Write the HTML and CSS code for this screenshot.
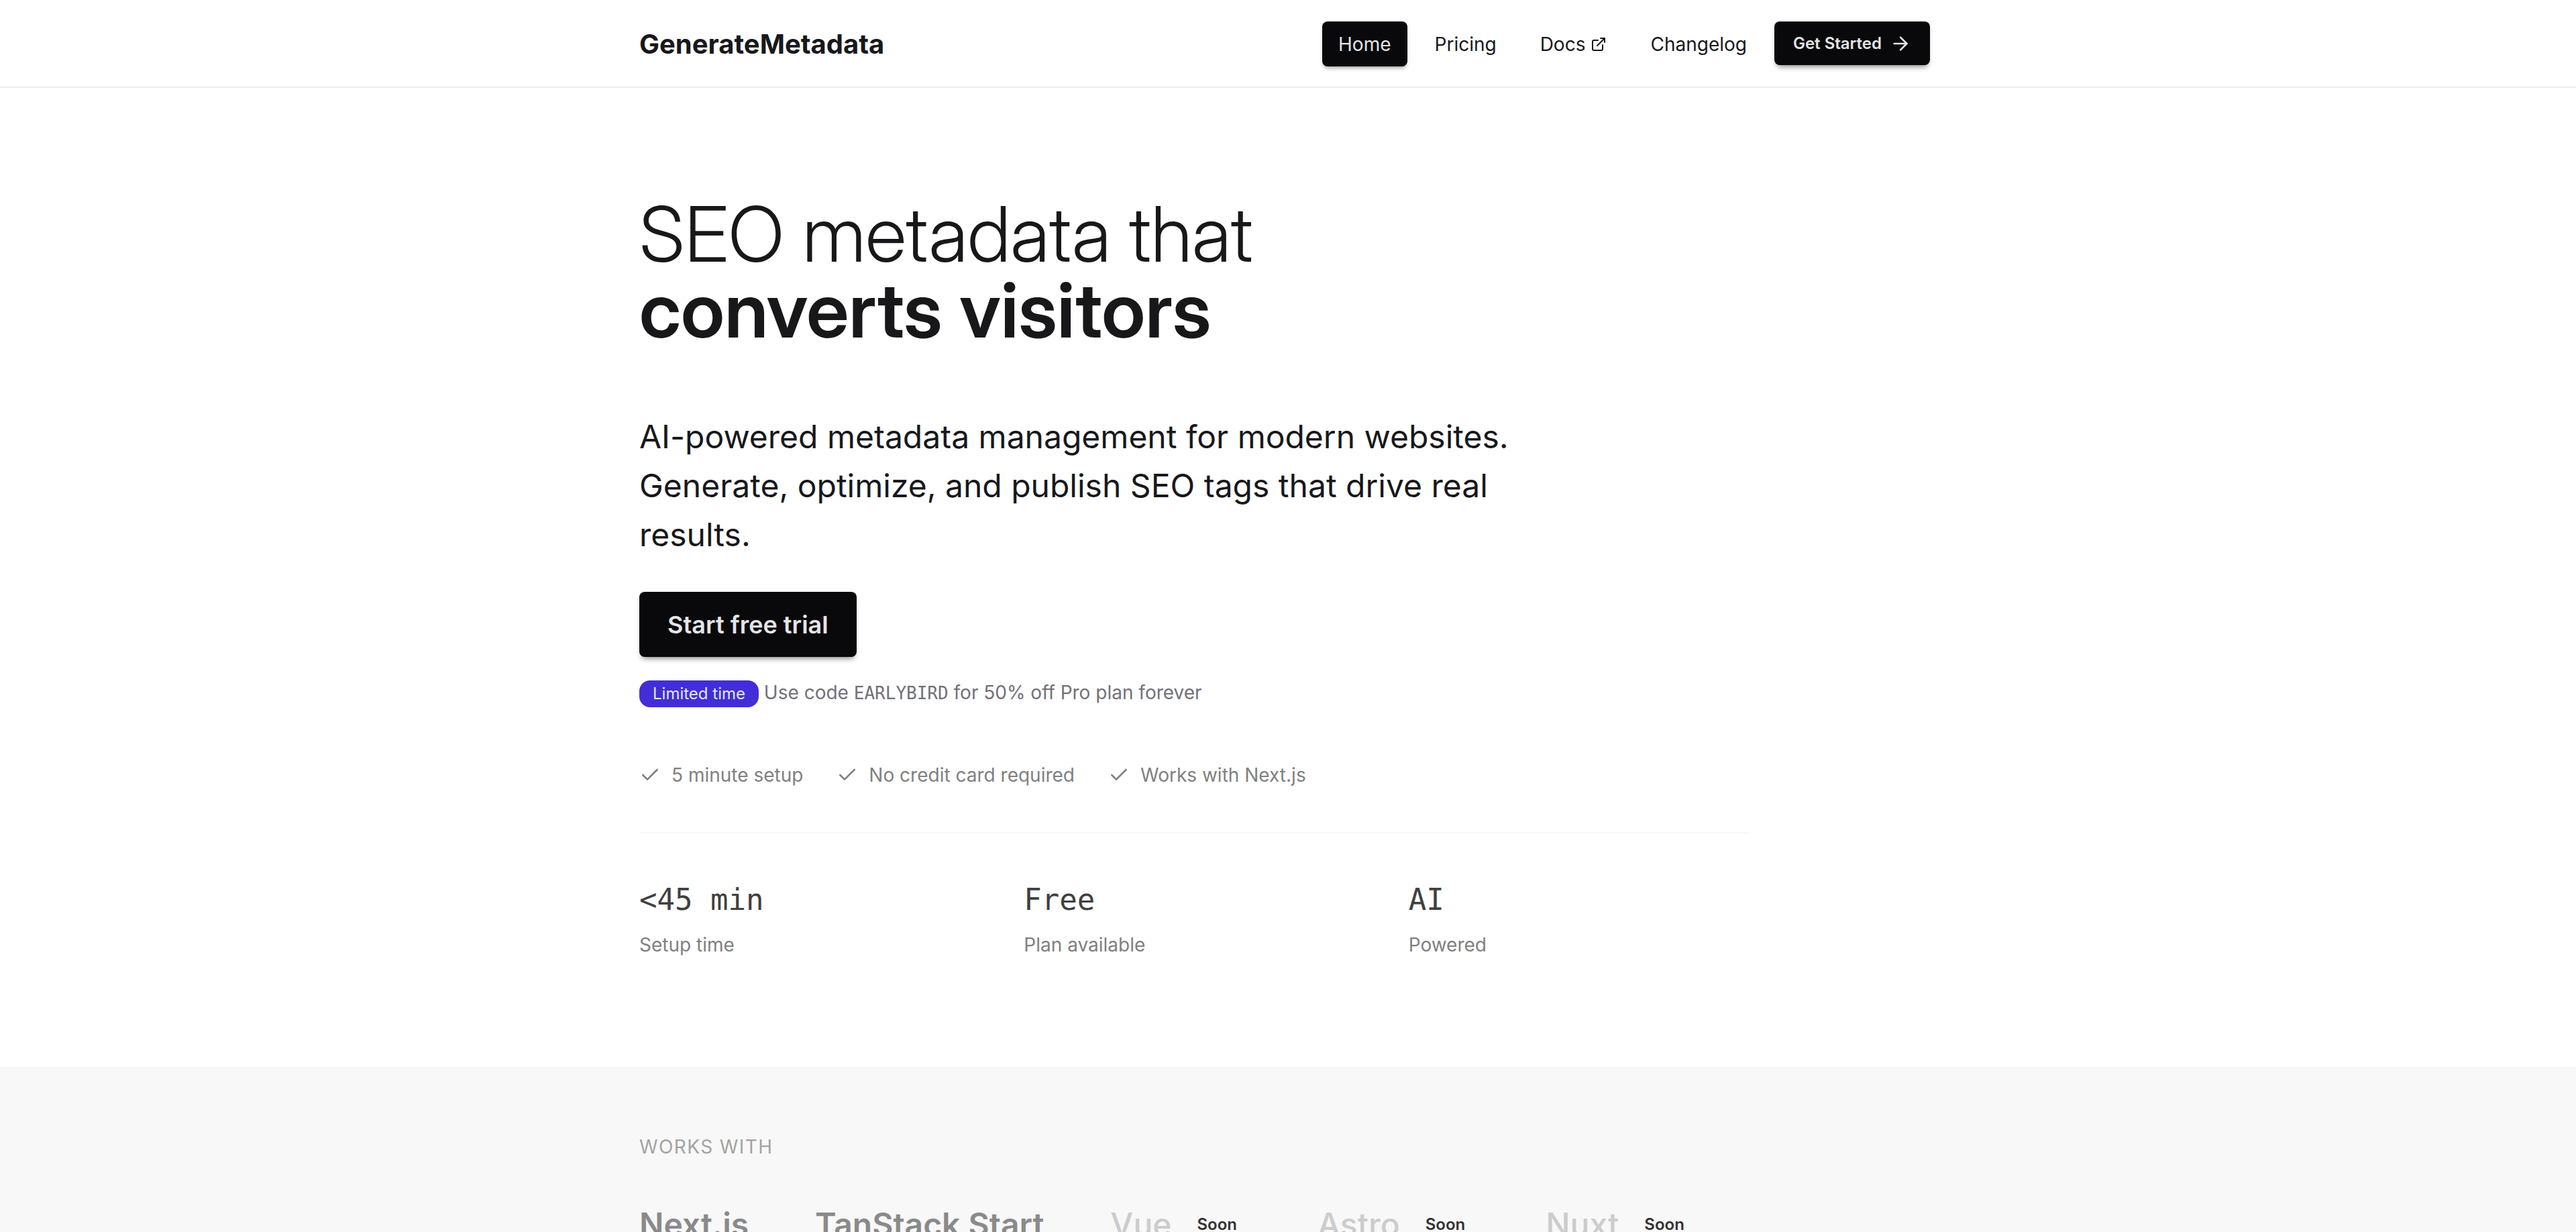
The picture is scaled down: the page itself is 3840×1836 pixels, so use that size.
FILE: index.html
```html
<!DOCTYPE html>
<html lang="en">
<head>
<meta charset="utf-8">
<meta name="viewport" content="width=device-width, initial-scale=1">
<title>GenerateMetadata</title>
<link rel="stylesheet" href="styles.css">
</head>
<body>
<header class="site-header">
  <div class="container header-row">
    <a class="logo" href="#">GenerateMetadata</a>
    <nav class="nav" aria-label="Main">
      <a class="nav-link nav-link-active" href="#">Home</a>
      <a class="nav-link" href="#">Pricing</a>
      <a class="nav-link" href="#">Docs
        <svg class="icon-external" viewBox="0 0 24 24" aria-hidden="true"><path d="M15 3h6v6"/><path d="M10 14 21 3"/><path d="M18 13v6a2 2 0 0 1-2 2H5a2 2 0 0 1-2-2V8a2 2 0 0 1 2-2h6"/></svg>
      </a>
      <a class="nav-link" href="#">Changelog</a>
      <button class="button button-small" type="button">Get Started
        <svg class="icon-arrow" viewBox="0 0 24 24" aria-hidden="true"><path d="M5 12h14"/><path d="m12 5 7 7-7 7"/></svg>
      </button>
    </nav>
  </div>
</header>
<main>
  <section class="container hero">
    <h1 class="hero-title">SEO metadata that <strong class="hero-strong">converts visitors</strong></h1>
    <p class="hero-text">AI-powered metadata management for modern websites. Generate, optimize, and publish SEO tags that drive real results.</p>
    <button class="button button-large" type="button">Start free trial</button>
    <p class="offer"><span class="badge">Limited time</span> Use code <code class="code">EARLYBIRD</code> for 50% off Pro plan forever</p>
    <ul class="checks">
      <li class="check"><svg class="icon-check" viewBox="0 0 24 24" aria-hidden="true"><path d="M20 6 9 17l-5-5"/></svg>5 minute setup</li>
      <li class="check"><svg class="icon-check" viewBox="0 0 24 24" aria-hidden="true"><path d="M20 6 9 17l-5-5"/></svg>No credit card required</li>
      <li class="check"><svg class="icon-check" viewBox="0 0 24 24" aria-hidden="true"><path d="M20 6 9 17l-5-5"/></svg>Works with Next.js</li>
    </ul>
    <dl class="stats">
      <div class="stat"><dt class="stat-label">Setup time</dt><dd class="stat-value">&lt;45 min</dd></div>
      <div class="stat"><dt class="stat-label">Plan available</dt><dd class="stat-value">Free</dd></div>
      <div class="stat"><dt class="stat-label">Powered</dt><dd class="stat-value">AI</dd></div>
    </dl>
  </section>
  <section class="works">
    <div class="container">
      <h2 class="works-title">Works with</h2>
      <ul class="frameworks">
        <li class="framework">Next.js</li>
        <li class="framework">TanStack Start</li>
        <li class="framework framework-soon">Vue <span class="soon">Soon</span></li>
        <li class="framework framework-soon">Astro <span class="soon">Soon</span></li>
        <li class="framework framework-soon">Nuxt <span class="soon">Soon</span></li>
      </ul>
    </div>
  </section>
</main>
</body>
</html>
```
FILE: styles.css
```css
* { box-sizing: border-box; margin: 0; padding: 0; }

body {
  background: #fff;
  color: #18181b;
  font-family: Inter, "Liberation Sans", sans-serif;
  font-size: 28px;
  line-height: 40px;
  padding-right: 10px;
}

a { color: inherit; text-decoration: none; }
ul { list-style: none; }

svg {
  fill: none;
  stroke: currentColor;
  stroke-width: 2;
  stroke-linecap: round;
  stroke-linejoin: round;
}

.container { max-width: 1924px; margin: 0 auto; }

.site-header { margin-right: -10px; padding-right: 10px; border-bottom: 2px solid #eee; }
.header-row { display: flex; justify-content: space-between; align-items: center; padding: 32px 0 30px; }
.logo { font-size: 40px; font-weight: 700; }
.nav { display: flex; align-items: flex-start; gap: 17px; }
.nav-link { display: flex; align-items: center; gap: 8px; padding: 14px 24px 13px; border-radius: 8px; }
.nav-link-active { background: #09090b; color: #e4e4e7; box-shadow: 0 4px 6px -2px rgba(0, 0, 0, .4); }
.icon-external { width: 24px; height: 24px; }
.icon-arrow { width: 32px; height: 32px; }

.button {
  display: flex;
  align-items: center;
  border: 0;
  border-radius: 8px;
  background: #09090b;
  color: #e4e4e7;
  font: inherit;
  font-weight: 600;
  box-shadow: 0 6px 8px -4px rgba(0, 0, 0, .5);
}
.button-small { height: 65px; gap: 12px; padding: 0 28px; font-size: 24px; }
.button-large { height: 97px; padding: 0 42px; font-size: 36px; }

.hero { padding: 161px 0 162px; }
.hero-title { font-family: "Inter Display", Inter, "Liberation Sans", sans-serif; font-size: 114px; line-height: 113px; font-weight: 300; }
.hero-strong { display: block; font-weight: 600; }
.hero-text { max-width: 1360px; margin-top: 96px; font-size: 48px; line-height: 73px; }
.button-large { margin-top: 49px; }
.offer { margin-top: 33px; color: #71717a; }
.badge { display: inline-block; border-radius: 16px; padding: 0 20px; background: #432dd7; color: #e0e7ff; font-size: 24px; }
.code { font-family: "DejaVu Sans Mono", monospace; font-size: 26px; }
.checks { display: flex; gap: 50px; margin-top: 81px; color: #808080; }
.check { display: flex; align-items: center; gap: 16px; }
.icon-check { width: 32px; height: 32px; }
.stats { display: grid; grid-template-columns: repeat(3, 1fr); gap: 66px; max-width: 1654px; margin-top: 65px; padding-top: 67px; border-top: 2px solid #f7f7f7; }
.stat { display: flex; flex-direction: column-reverse; gap: 15px; }
.stat-value { font: 44px/64px "DejaVu Sans Mono", monospace; color: #404040; }
.stat-label { color: #808080; }

.works { margin-right: -10px; padding: 99px 10px 98px 0; background: #f8f8f8; }
.works-title { font-size: 28px; font-weight: 400; letter-spacing: 0.05em; text-transform: uppercase; color: #a3a3a3; }
.frameworks { display: flex; gap: 99px; margin-top: 64px; }
.framework { display: flex; align-items: center; gap: 17px; font-size: 48px; line-height: 64px; font-weight: 600; color: #8a8a8a; }
.framework-soon { font-weight: 500; color: #ccc; }
.soon { padding: 0 21px; font-size: 24px; line-height: 40px; font-weight: 600; color: #333; }
```
